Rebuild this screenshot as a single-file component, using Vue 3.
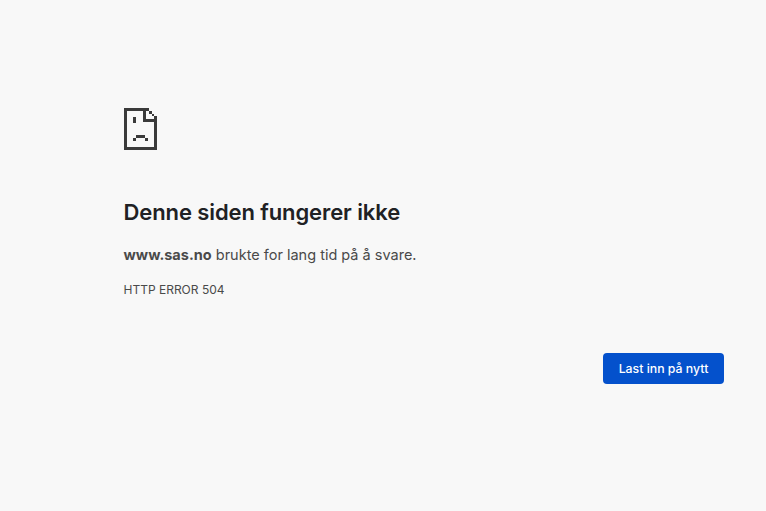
<script setup>
const title = 'Denne siden fungerer ikke'
</script>

<template>
  <main class="page">
    <svg class="icon" width="34" height="42" viewBox="0 0 34 42" shape-rendering="crispEdges" aria-hidden="true">
      <path fill="#3a3a3a" d="M0 0H25V3H3V39H30V14H33V42H0Z" />
      <path fill="#3a3a3a" d="M19 3H22V11H33V14H19Z" />
      <path fill="#3a3a3a" d="M25 3H28V6H25ZM28 6H30V8H28ZM30 8H33V11H30Z" />
      <path fill="#3a3a3a" d="M9 9H12V15H9Z" />
      <path fill="#3a3a3a" d="M12 27H21V30H12ZM9 30H12V33H9ZM21 30H24V33H21Z" />
    </svg>
    <h1 class="title">{{ title }}</h1>
    <p class="message"><strong>www.sas.no</strong> brukte for lang tid på å svare.</p>
    <p class="code">HTTP ERROR 504</p>
    <div class="actions">
      <button class="reload" type="button">Last inn på nytt</button>
    </div>
  </main>
</template>

<style>
html, body { margin: 0; background: #f8f8f8; }
</style>

<style scoped>
.page {
  box-sizing: border-box;
  width: 766px;
  height: 511px;
  padding: 108px 42px 0 123.5px;
  display: flex;
  flex-direction: column;
  align-items: flex-start;
  background: #f8f8f8;
  font-family: Inter, "Liberation Sans", sans-serif;
  overflow: hidden;
}
.icon { display: block; margin-left: 0.5px; }
.title {
  margin: 48px 0 0;
  font-size: 22px;
  line-height: 28px;
  font-weight: 600;
  letter-spacing: -0.1px;
  color: #202124;
}
.message {
  margin: 18px 0 0;
  font-size: 14.5px;
  line-height: 22px;
  color: #4a4a4a;
}
.message strong { font-weight: 700; }
.code {
  margin: 16px 0 0;
  font-size: 12px;
  line-height: 16px;
  color: #4a4a4a;
}
.actions {
  align-self: stretch;
  display: flex;
  justify-content: flex-end;
  margin-top: 55px;
}
.reload {
  width: 121px;
  height: 31px;
  padding: 0;
  border: 0;
  border-radius: 4px;
  background: #0451cc;
  color: #fff;
  font: 500 12.3px/31px Inter, "Liberation Sans", sans-serif;
}
</style>
